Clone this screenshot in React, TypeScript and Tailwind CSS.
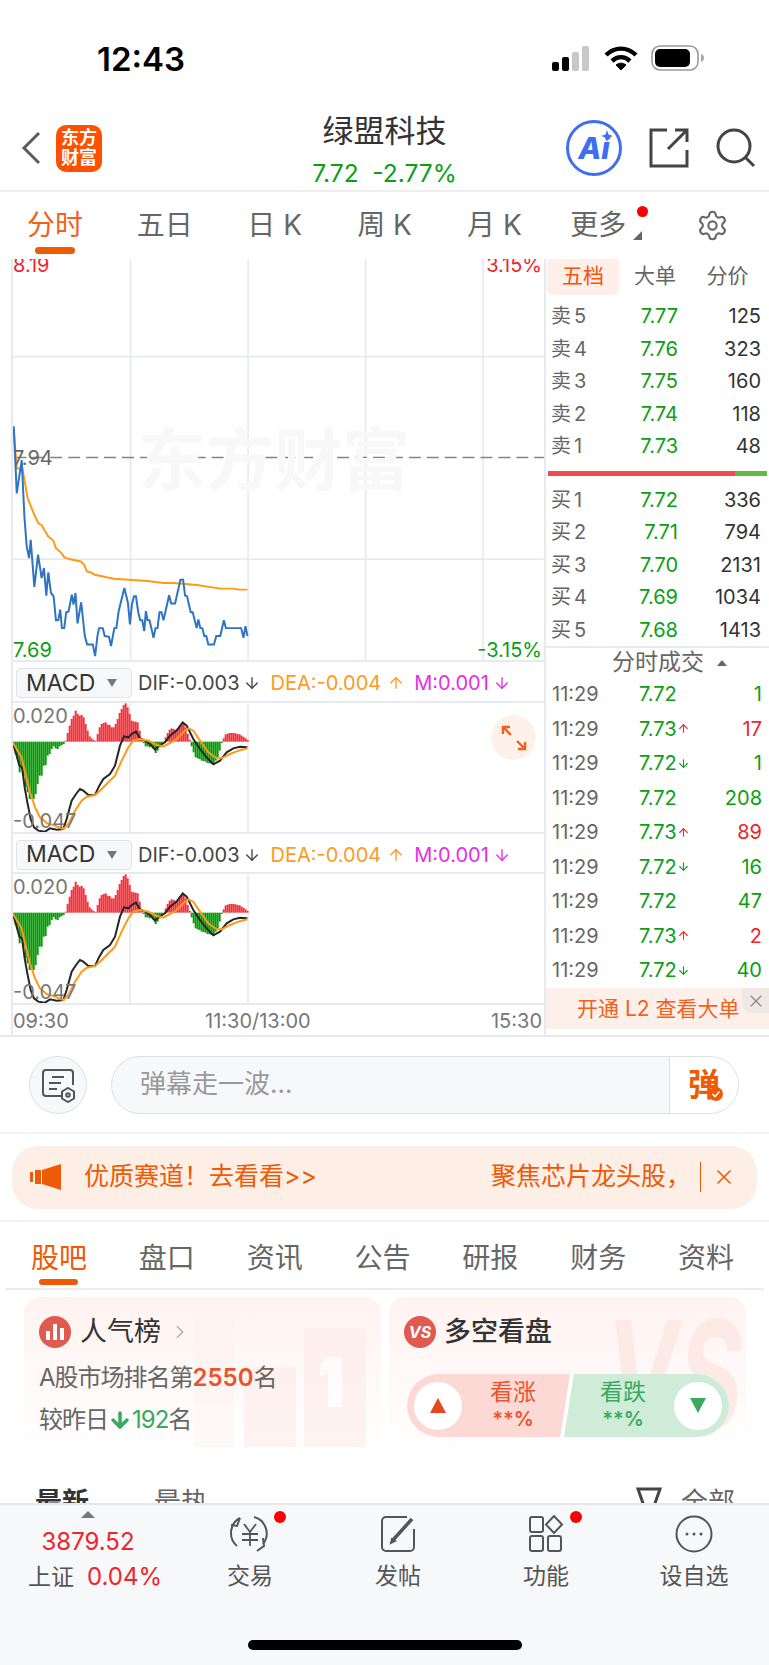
import { ArrowDown, ArrowUp, ChevronDown, ChevronRight, Settings, X } from 'lucide-react';

const sellRows = [
  ['卖', '5', '7.77', '125'],
  ['卖', '4', '7.76', '323'],
  ['卖', '3', '7.75', '160'],
  ['卖', '2', '7.74', '118'],
  ['卖', '1', '7.73', '48'],
];

const buyRows = [
  ['买', '1', '7.72', '336'],
  ['买', '2', '7.71', '794'],
  ['买', '3', '7.70', '2131'],
  ['买', '4', '7.69', '1034'],
  ['买', '5', '7.68', '1413'],
];

type Trade = { price: string; qty: string; dir: 'up' | 'down' | 'flat' };

const trades: Trade[] = [
  { price: '7.72', qty: '1', dir: 'flat' },
  { price: '7.73', qty: '17', dir: 'up' },
  { price: '7.72', qty: '1', dir: 'down' },
  { price: '7.72', qty: '208', dir: 'flat' },
  { price: '7.73', qty: '89', dir: 'up' },
  { price: '7.72', qty: '16', dir: 'down' },
  { price: '7.72', qty: '47', dir: 'flat' },
  { price: '7.73', qty: '2', dir: 'up' },
  { price: '7.72', qty: '40', dir: 'down' },
];

// price curve, 3 units per px
const priceLine =
  '38,528 47,730 62,630 70,800 77,890 84,925 89,870 100,1012 111,915 122,985 129,955 136,1038 142,968 150,1030 158,1040 165,1112 172,1112 178,1080 183,1136 190,1136 196,1088 203,1086 213,1035 218,1065 224,1030 230,1122 241,1058 252,1160 259,1185 276,1185 283,1220 290,1160 295,1136 306,1136 312,1160 325,1162 331,1190 341,1136 347,1136 354,1085 371,1015 382,1060 388,1125 394,1064 400,1040 406,1040 413,1088 419,1112 425,1112 431,1145 436,1085 441,1112 447,1112 459,1165 465,1136 471,1136 477,1088 483,1088 489,1112 506,1037 512,1062 524,1062 540,990 548,990 554,1038 560,1040 571,1088 577,1088 589,1136 594,1110 600,1136 606,1136 612,1160 618,1160 624,1185 641,1185 648,1160 660,1160 671,1112 677,1136 723,1136 730,1165 736,1130 742,1160';

const avgLine =
  '38,540 47,655 64,655 72,700 80,745 90,770 100,795 112,820 122,826 130,840 142,860 157,872 165,895 182,910 190,922 205,928 240,935 250,945 258,965 270,968 282,975 340,987 385,990 440,994 490,1000 520,1000 590,1006 660,1017 700,1017 715,1020 742,1020';

const difLine =
  '38,250 50,290 58,320 66,325 74,385 82,430 92,480 102,505 115,515 135,518 150,508 170,512 190,510 200,480 215,425 228,405 240,390 250,395 265,408 285,408 298,380 310,360 330,345 345,320 360,260 372,232 385,235 395,225 408,218 420,238 435,245 450,255 465,272 480,258 495,250 510,230 530,215 548,190 560,200 580,240 600,270 620,295 640,316 660,305 680,280 700,268 720,263 742,265';

const deaLine =
  '38,250 50,270 65,295 75,340 90,400 105,445 120,475 140,492 165,500 190,510 205,495 225,455 245,425 260,413 285,408 300,395 320,375 345,350 365,305 385,265 400,245 420,240 445,245 470,258 490,262 510,252 530,240 550,220 565,208 580,215 600,245 625,280 650,298 665,298 690,285 715,275 742,268';

// histogram ends, one bar every 6 units starting at x=38, zero axis at y=248
const histogram = [
  262, 285, 300, 340, 330, 350, 385, 400, 420, 420, 420, 405, 375, 350, 350, 320, 318, 290, 285, 270, 262, 268, 270, 262, 258, 255,
  245, 222, 200, 180, 170, 155, 165, 170, 168, 175, 195, 215, 232, 238, 243, 246, 225, 205, 195, 192, 190, 197, 198, 205, 205, 195, 180, 162, 150, 138, 133, 145, 165, 185, 187, 188, 190, 215, 240,
  252, 262, 262, 265, 262, 270, 282, 275, 265, 258,
  247, 235, 222, 212, 208, 210, 212, 208, 200, 195, 195, 205, 225, 242,
  262, 280, 295, 298, 300, 305, 306, 308, 312, 313, 315, 316, 305, 295, 275, 252,
  238, 226, 224, 222, 222, 222, 223, 225, 226, 230, 234, 238, 243,
];

function PriceChart() {
  return (
    <svg viewBox="39 24 1593 1209" className="block h-full w-full">
      <g stroke="#e7eaf1" strokeWidth="5">
        <line x1="390" y1="24" x2="390" y2="1232" />
        <line x1="744" y1="24" x2="744" y2="1232" />
        <line x1="1098" y1="24" x2="1098" y2="1232" />
        <line x1="1452" y1="24" x2="1452" y2="1232" />
        <line x1="36" y1="318" x2="1635" y2="318" />
        <line x1="36" y1="928" x2="1635" y2="928" />
      </g>
      <line x1="40" y1="622" x2="1635" y2="622" stroke="#858585" strokeWidth="5" strokeDasharray="36 18" />
      <polyline points={avgLine} fill="none" stroke="#ff9a14" strokeWidth="6" />
      <polyline points={priceLine} fill="none" stroke="#2f74c4" strokeWidth="6" />
    </svg>
  );
}

function MacdChart() {
  return (
    <svg viewBox="39 132 1593 387" className="block h-full w-full">
      <g stroke="#e7eaf1" strokeWidth="5">
        <line x1="390" y1="134" x2="390" y2="520" />
        <line x1="744" y1="134" x2="744" y2="520" />
      </g>
      {histogram.map((end, i) => (
        <rect
          key={i}
          x={38 + i * 6}
          y={Math.min(end, 248)}
          width="6"
          height={Math.abs(end - 248)}
          fill={end > 248 ? '#0a9b0a' : '#f2333b'}
        />
      ))}
      <polyline points={difLine} fill="none" stroke="#262626" strokeWidth="6" />
      <polyline points={deaLine} fill="none" stroke="#ff9a14" strokeWidth="6" />
    </svg>
  );
}

function MacdHeader() {
  return (
    <div className="flex h-full items-center pl-[3px] pt-[3px] text-[20px] text-[#444]">
      <div className="flex h-[30px] w-[116px] items-center rounded-[4px] border border-[#e0e3ea] bg-[#f7f8fa] pl-[9px] text-[23px] text-[#333]">
        MACD
        <span className="ml-[12px] h-0 w-0 border-x-[5px] border-t-[8px] border-x-transparent border-t-[#777]" />
      </div>
      <span className="ml-[6px]">DIF:-0.003</span>
      <ArrowDown size={18} strokeWidth={1.8} className="ml-[3px]" />
      <span className="ml-[10px] text-[#ff9a1f]">DEA:-0.004</span>
      <ArrowUp size={18} strokeWidth={1.8} className="ml-[6px] text-[#ff9a1f]" />
      <span className="ml-[9px] text-[#e62ee6]">M:0.001</span>
      <ArrowDown size={18} strokeWidth={1.8} className="ml-[4px] text-[#e62ee6]" />
    </div>
  );
}

function MacdPanel({ expand }: { expand?: boolean }) {
  return (
    <div className="relative h-full">
      <MacdChart />
      <span className="absolute left-0 top-[2px] text-[20px] leading-[22px] text-[#777]">0.020</span>
      <span className="absolute left-0 bottom-0 text-[20px] leading-[22px] text-[#777]">-0.047</span>
      {expand && (
        <div className="absolute left-[478px] top-[12px] flex h-[45px] w-[45px] items-center justify-center rounded-full bg-[#fdf1ea]">
          <svg width="26" height="26" viewBox="0 0 26 26" fill="none" stroke="#f2601a" strokeWidth="2.4">
            <path d="M2 9V2h7M2 2l8 8M24 17v7h-7M24 24l-8-8" />
          </svg>
        </div>
      )}
    </div>
  );
}

function QuoteRow({ row }: { row: string[] }) {
  return (
    <div className="flex h-[32.5px] items-center pl-[5px] pr-[8px] text-[20px]">
      <span className="w-[79px] text-[#666]">
        {row[0]}
        <span className="ml-[3px]">{row[1]}</span>
      </span>
      <span className="w-[48px] text-right text-[#0a9f14]">{row[2]}</span>
      <span className="flex-1 text-right text-[#333]">{row[3]}</span>
    </div>
  );
}

function TradeRow({ trade }: { trade: Trade }) {
  const isUp = trade.dir === 'up';
  return (
    <div className="flex h-[34.5px] items-center pl-[6px] pr-[7px] text-[20px]">
      <span className="w-[87px] text-[#666]">11:29</span>
      <span className="text-[#0a9f14]">{trade.price}</span>
      {trade.dir === 'up' && <ArrowUp size={13} strokeWidth={2} className="text-[#f2232b]" />}
      {trade.dir === 'down' && <ArrowDown size={13} strokeWidth={2} className="text-[#0a9f14]" />}
      <span className={`ml-auto ${isUp ? 'text-[#f2232b]' : 'text-[#0a9f14]'}`}>{trade.qty}</span>
    </div>
  );
}

function StatusBar() {
  return (
    <div className="flex h-[100px] items-start justify-between pl-[97px] pr-[64px] pt-[38px]">
      <span className="mt-[2px] text-[33px] font-semibold leading-[38px] text-black">12:43</span>
      <div className="flex items-center gap-[14px] pt-[7px]">
        <svg width="38" height="25" viewBox="0 0 38 25">
          <rect x="0" y="16" width="7" height="9" rx="2" fill="#000" />
          <rect x="10" y="11" width="7" height="14" rx="2" fill="#000" />
          <rect x="20" y="6" width="7" height="19" rx="2" fill="#c8c8c8" />
          <rect x="30" y="0" width="7" height="25" rx="2" fill="#c8c8c8" />
        </svg>
        <svg width="34" height="25" viewBox="0 0 34 25" fill="none" stroke="#000" strokeWidth="4.4">
          <path d="M2 9c9-8.500 21-8.500 30 0" />
          <path d="M8 15c5.500-5 12.500-5 18 0" />
          <path d="M17 24l-5-5c3-2.500 7-2.500 10 0z" fill="#000" strokeWidth="1" />
        </svg>
        <svg width="54" height="26" viewBox="0 0 54 26" fill="none" className="-ml-[1px]">
          <rect x="1" y="1" width="46" height="24" rx="8" stroke="#9a9a9a" strokeWidth="1.6" />
          <rect x="4" y="4" width="35" height="18" rx="5" fill="#000" />
          <path d="M50 9v8c1.800-.6 3-2.200 3-4s-1.200-3.400-3-4z" fill="#a8a8a8" />
        </svg>
      </div>
    </div>
  );
}

function NavBar() {
  return (
    <div className="relative flex h-[92px] items-center justify-between border-b-2 border-[#eeeeee] pl-[21px] pr-[13px] pt-[6px]">
      <div className="flex items-center gap-[15px]">
        <svg width="20" height="34" viewBox="0 0 20 34" fill="none" stroke="#5c5c5c" strokeWidth="3">
          <path d="M18 2L3 17l15 15" />
        </svg>
        <div className="flex h-[47px] w-[46px] flex-col items-center justify-center rounded-[10px] bg-[#ff5000] text-[18px] font-bold leading-[20px] text-white">
          <span>东方</span>
          <span>财富</span>
        </div>
      </div>
      <div className="absolute left-0 right-0 top-[12px] flex flex-col items-center">
        <span className="text-[31px] leading-[38px] text-[#333]">绿盟科技</span>
        <span className="mt-[9px] whitespace-pre text-[24.5px] leading-[28px] text-[#0a9f14]">7.72  -2.77%</span>
      </div>
      <div className="flex items-center gap-[27px]">
        <div className="relative flex h-[56px] w-[56px] items-center justify-center rounded-full border-[3px] border-[#3f6ff0] text-[30px] font-extrabold italic text-[#3f6ff0]">
          Ai
          <svg width="12" height="12" viewBox="0 0 12 12" fill="#3f6ff0" className="absolute left-[32px] top-[7px]">
            <path d="M6 0l1.500 4.500L12 6 7.500 7.500 6 12 4.500 7.500 0 6l4.500-1.500z" />
          </svg>
        </div>
        <svg width="40" height="40" viewBox="0 0 40 40" fill="none" stroke="#444" strokeWidth="3">
          <path d="M18 2H2v36h36V22M38 2L19 21M26 2h12v12" />
        </svg>
        <svg width="40" height="40" viewBox="0 0 40 40" fill="none" stroke="#444" strokeWidth="3">
          <circle cx="18" cy="18" r="16" />
          <path d="M30 30l8 8" />
        </svg>
      </div>
    </div>
  );
}

function RangeTabs() {
  return (
    <div className="grid h-[67px] grid-cols-7 items-center pb-[1px] text-[28px] leading-[34px] text-[#666]">
      <div className="relative flex flex-col items-center text-[#f2601a]">
        分时
        <span className="absolute top-[39px] h-[7px] w-[40px] rounded-full bg-[#ee5a06]" />
      </div>
      <div className="text-center">五日</div>
      <div className="text-center">日 K</div>
      <div className="text-center">周 K</div>
      <div className="text-center">月 K</div>
      <div className="relative pr-[12px] text-center">
        更多
        <span className="absolute left-[88px] top-[-2px] h-[11px] w-[11px] rounded-full bg-[#fa0000]" />
        <span className="absolute left-[84px] top-[23px] h-0 w-0 border-b-[9px] border-l-[9px] border-b-[#666] border-l-transparent" />
      </div>
      <div className="flex justify-center pr-[4px]">
        <Settings size={33} strokeWidth={1.5} className="text-[#666]" />
      </div>
    </div>
  );
}

function ChartColumn() {
  return (
    <div className="ml-[11px] flex w-[533px] flex-col border-l-2 border-[#e7eaf1]">
      <div className="relative h-[405px] overflow-hidden border-b-2 border-[#e7eaf1]">
        <PriceChart />
        <span className="absolute left-[125px] top-[161px] text-[68px] font-bold leading-[80px] text-[#f8f8f8]">东方财富</span>
        <span className="absolute left-0 top-[-5px] text-[20px] leading-[22px] text-[#f2232b]">8.19</span>
        <span className="absolute right-[2px] top-[-5px] text-[20px] leading-[22px] text-[#f2232b]">3.15%</span>
        <span className="absolute left-0 top-[188px] text-[20px] leading-[22px] text-[#666]">7.94</span>
        <span className="absolute left-0 top-[380px] text-[20px] leading-[22px] text-[#0a9f14]">7.69</span>
        <span className="absolute right-[2px] top-[380px] text-[20px] leading-[22px] text-[#0a9f14]">-3.15%</span>
      </div>
      <div className="h-[39px]">
        <MacdHeader />
      </div>
      <div className="h-[133px] border-y-2 border-[#e7eaf1]">
        <MacdPanel expand />
      </div>
      <div className="h-[38px]">
        <MacdHeader />
      </div>
      <div className="h-[133px] border-y-2 border-[#e7eaf1]">
        <MacdPanel />
      </div>
      <div className="relative flex h-[30px] items-center justify-between pr-[2px] pt-[2px] text-[20px] text-[#777]">
        <span>09:30</span>
        <span className="absolute left-[192px]">11:30/13:00</span>
        <span>15:30</span>
      </div>
    </div>
  );
}

function OrderColumn() {
  return (
    <div className="flex flex-1 flex-col border-l-2 border-[#e7eaf1]">
      <div className="flex h-[36px] items-center text-[21px] text-[#666]">
        <div className="ml-[1px] flex h-full w-[72px] items-center justify-center rounded-b-[6px] bg-[#ffefe8] pb-[2px] text-[#f5520a]">五档</div>
        <div className="w-[72px] pb-[2px] text-center">大单</div>
        <div className="w-[73px] pb-[2px] text-center">分价</div>
      </div>
      <div className="mt-[5px]">
        {sellRows.map((row) => (
          <QuoteRow key={row[0] + row[1]} row={row} />
        ))}
      </div>
      <div className="flex h-[21px] items-center px-[2px]">
        <div className="h-[5px] w-[187px] bg-[#ef4b50]" />
        <div className="h-[5px] flex-1 bg-[#62bb48]" />
      </div>
      <div>
        {buyRows.map((row) => (
          <QuoteRow key={row[0] + row[1]} row={row} />
        ))}
      </div>
      <div className="flex h-[31px] items-center justify-center gap-[13px] border-t-2 border-[#e7eaf1] pl-[24px] text-[23px] text-[#666]">
        分时成交
        <span className="h-0 w-0 border-x-[5px] border-b-[6px] border-x-transparent border-b-[#666]" />
      </div>
      <div>
        {trades.map((trade, i) => (
          <TradeRow key={i} trade={trade} />
        ))}
      </div>
      <div className="relative mb-[6px] mt-auto flex h-[41px] items-center bg-[#fdf0ea] pl-[31px] text-[21px] text-[#f2601a]">
        开通 L2 查看大单
        <div className="absolute right-0 top-0 flex h-[25px] w-[27px] items-center justify-center rounded-bl-[10px] bg-[#efe8e4]">
          <X size={20} strokeWidth={1.4} className="text-[#888]" />
        </div>
      </div>
    </div>
  );
}

function DanmuBar() {
  return (
    <div className="flex h-[97px] items-center gap-[24px] border-b-2 border-[#f4f4f4] pl-[29px] pr-[30px]">
      <div className="flex h-[58px] w-[58px] items-center justify-center rounded-full border border-[#dcdfe4] bg-[#f7f8fa]">
        <svg width="36" height="36" viewBox="0 0 36 36" fill="none" stroke="#555" strokeWidth="2">
          <path d="M21 29H6a3 3 0 0 1-3-3V6a3 3 0 0 1 3-3h24a3 3 0 0 1 3 3v12" />
          <path d="M12 10h12M9 16h12M9 22h8" />
          <path d="M28 21l6 3.500v7L28 35l-6-3.500v-7z" />
          <circle cx="28" cy="28" r="1.800" />
        </svg>
      </div>
      <div className="flex h-[58px] flex-1 overflow-hidden rounded-full border border-[#dcdfe4] bg-[#f7f8fa]">
        <div className="flex-1 pl-[28px] text-[26px] leading-[54px] text-[#999]">弹幕走一波...</div>
        <div className="relative flex w-[69px] items-center border-l border-[#dcdfe4] bg-white pl-[18px] text-[32px] font-bold text-[#ee5a06]">
          弹
          <span className="absolute left-[39px] top-[30px] flex h-[14px] w-[14px] items-center justify-center rounded-full bg-[#ee5a06]">
            <svg width="10" height="10" viewBox="0 0 10 10" fill="none" stroke="#fff" strokeWidth="1.600">
              <path d="M1.500 5l2.500 2.500 4.500-5" />
            </svg>
          </span>
        </div>
      </div>
    </div>
  );
}

function PromoBanner() {
  return (
    <div className="flex h-[88px] items-center border-b-2 border-[#f0f0f0] px-[12px]">
      <div className="flex h-[63px] w-full items-center rounded-[26px] bg-[#fdeee6] pl-[18px] pr-[21px] text-[25px] text-[#ee5a06]">
        <svg width="32" height="26" viewBox="0 0 32 26" fill="#ee5a06">
          <rect x="0" y="8" width="3" height="10" />
          <rect x="5" y="6" width="6" height="14" />
          <path d="M12 6L31 0v26L12 20z" />
        </svg>
        <span className="ml-[22px]">优质赛道！去看看&gt;&gt;</span>
        <span className="ml-auto">聚焦芯片龙头股，</span>
        <span className="ml-[9px] h-[30px] w-[1px] bg-[#ee5a06]" />
        <X size={24} strokeWidth={1.6} className="ml-[11px]" />
      </div>
    </div>
  );
}

function ContentTabs() {
  return (
    <div className="mx-[5px] grid h-[68px] grid-cols-7 border-b-2 border-[#ececec] pr-[4px] pt-[16px] text-[28px] leading-[40px] text-[#666]">
      {['股吧', '盘口', '资讯', '公告', '研报', '财务', '资料'].map((name, i) => (
        <div key={name} className={`relative flex justify-center ${i === 0 ? 'text-[#ee5a06]' : ''}`}>
          {name}
          {i === 0 && <span className="absolute top-[41px] h-[6px] w-[39px] rounded-full bg-[#ee5a06]" />}
        </div>
      ))}
    </div>
  );
}

function RankCard() {
  return (
    <div className="relative h-[155px] w-[357px] overflow-hidden rounded-[16px] bg-gradient-to-b from-[#fff3f0] to-white pl-[15px] pt-[18px]">
      <svg width="190" height="140" viewBox="0 0 190 140" className="absolute left-[170px] top-[10px]" fill="#fde9e6" opacity="0.55">
        <rect x="50" y="60" width="52" height="80" />
        <rect x="110" y="22" width="62" height="118" />
        <rect x="0" y="12" width="40" height="128" opacity="0.4" />
        <path d="M134 50h14v50h-14V66l-8 4v-12z" fill="#fff" />
      </svg>
      <div className="relative flex items-center">
        <span className="flex h-[32px] w-[32px] items-center justify-center rounded-full bg-[#e05a50]">
          <svg width="18" height="16" viewBox="0 0 18 16" fill="#fff">
            <rect x="0" y="7" width="4" height="9" />
            <rect x="7" y="0" width="4" height="16" />
            <rect x="14" y="4" width="4" height="12" />
          </svg>
        </span>
        <span className="ml-[9px] text-[27px] leading-[34px] text-[#333]">人气榜</span>
        <ChevronRight size={22} strokeWidth={1.4} className="ml-[8px] text-[#aaa]" />
      </div>
      <div className="relative mt-[10px] text-[24px] leading-[38px] tracking-[-1px] text-[#666]">
        A股市场排名第<span className="font-semibold tracking-normal text-[#e8552d]">2550</span>名
      </div>
      <div className="relative mt-[4px] flex items-center text-[24px] leading-[38px] tracking-[-1px] text-[#666]">
        较昨日
        <ArrowDown size={24} strokeWidth={3.5} className="text-[#3aa960]" />
        <span className="text-[#3aa960]">192</span>名
      </div>
    </div>
  );
}

function BullBearCard() {
  return (
    <div className="relative h-[155px] w-[357px] overflow-hidden rounded-[16px] bg-gradient-to-b from-[#fff3f0] to-white pl-[15px] pt-[18px]">
      <span className="absolute right-[4px] top-0 origin-right scale-x-[0.65] text-[150px] font-bold italic leading-[155px] text-[#fdeae6]">VS</span>
      <div className="relative flex items-center">
        <span className="flex h-[32px] w-[32px] items-center justify-center rounded-full bg-[#e05a50] text-[16px] font-bold italic text-white">VS</span>
        <span className="ml-[8px] text-[27px] font-medium leading-[34px] text-[#333]">多空看盘</span>
      </div>
      <div className="relative ml-[3px] mt-[25px] flex h-[63px] w-[322px] overflow-hidden rounded-full bg-white text-center">
        <div className="flex w-[163px] shrink-0 items-center bg-[#fdd9d6] pl-[7px] [clip-path:polygon(0_0,100%_0,94%_100%,0_100%)]">
          <span className="flex h-[48px] w-[48px] items-center justify-center rounded-full bg-white">
            <span className="h-0 w-0 border-x-[8px] border-b-[15px] border-x-transparent border-b-[#e5481c]" />
          </span>
          <div className="ml-[28px] flex flex-col leading-[27px] text-[#e8552d]">
            <span className="text-[23px]">看涨</span>
            <span className="text-[20px] font-semibold">**%</span>
          </div>
        </div>
        <div className="-ml-[6px] flex flex-1 items-center justify-end bg-[#cfecd8] pr-[7px] [clip-path:polygon(6%_0,100%_0,100%_100%,0_100%)]">
          <div className="mr-[28px] flex flex-col leading-[27px] text-[#3aa960]">
            <span className="text-[23px]">看跌</span>
            <span className="text-[20px] font-semibold">**%</span>
          </div>
          <span className="flex h-[48px] w-[48px] items-center justify-center rounded-full bg-white">
            <span className="h-0 w-0 border-x-[8px] border-t-[15px] border-x-transparent border-t-[#3aa960]" />
          </span>
        </div>
      </div>
    </div>
  );
}

function FeedFilter() {
  return (
    <div className="ml-[35px] mr-[34px] mt-[33px] flex items-center text-[27px] leading-[36px] text-[#666]">
      <span className="font-bold text-[#333]">最新</span>
      <ChevronDown size={18} strokeWidth={1.6} className="ml-[5px] mt-[10px] text-[#555]" />
      <span className="ml-[42px]">最热</span>
      <svg width="26" height="24" viewBox="0 0 26 24" fill="none" stroke="#444" strokeWidth="3" className="-mt-[8px] ml-auto">
        <path d="M2 2h22L17 22H9z" />
      </svg>
      <span className="ml-[19px]">全部</span>
    </div>
  );
}

function BottomBar() {
  return (
    <div className="relative h-[162px] shrink-0 border-t-2 border-[#e6e6e6] bg-[#f7f8fa]">
      <div className="grid grid-cols-[176px_repeat(4,148px)] text-[23px] text-[#555]">
        <div className="relative flex flex-col items-center pt-[21px]">
          <span className="absolute left-[81px] top-[6px] h-0 w-0 border-x-[7px] border-b-[7px] border-x-transparent border-b-[#777]" />
          <span className="text-[24px] leading-[32px] text-[#f2232b]">3879.52</span>
          <span className="mt-[2px] flex items-center self-start whitespace-nowrap pl-[28px] leading-[34px]">
            上证
            <span className="ml-[13px] text-[24px] text-[#f2232b]">0.04%</span>
          </span>
        </div>
        <div className="relative flex flex-col items-center pt-[10px]">
          <svg width="44" height="38" viewBox="0 0 44 38" fill="none" stroke="#555" strokeWidth="2">
            <path d="M12 3a17 17 0 0 0-3 28M26 2a17 17 0 0 1 9 27" />
            <path d="M3 10l6 1 3-8M29 36l7-5-1-8" />
            <path d="M16 9l6 8 6-8M14 19h16M14 25h16M22 17v14" strokeWidth="1.800" />
          </svg>
          <span className="mt-[6px] leading-[34px]">交易</span>
          <span className="absolute left-[98px] top-[6px] h-[12px] w-[12px] rounded-full bg-[#fa0000]" />
        </div>
        <div className="flex flex-col items-center pt-[10px]">
          <svg width="38" height="38" viewBox="0 0 38 38" fill="none" stroke="#555" strokeWidth="2">
            <path d="M28 2H7a4 4 0 0 0-4 4v26a4 4 0 0 0 4 4h24a4 4 0 0 0 4-4V14" />
            <path d="M14 25L33 4" strokeWidth="3.500" />
            <path d="M12 28l1-4 3 2z" fill="#555" />
          </svg>
          <span className="mt-[6px] leading-[34px]">发帖</span>
        </div>
        <div className="relative flex flex-col items-center pt-[10px]">
          <svg width="36" height="38" viewBox="0 0 36 38" fill="none" stroke="#555" strokeWidth="2">
            <rect x="2" y="2" width="13" height="15" rx="2" />
            <rect x="2" y="21" width="13" height="15" rx="2" />
            <rect x="20" y="21" width="13" height="15" rx="2" />
            <path d="M26 1l8 8.500-8 8.500-8-8.500z" />
          </svg>
          <span className="mt-[6px] leading-[34px]">功能</span>
          <span className="absolute left-[98px] top-[6px] h-[12px] w-[12px] rounded-full bg-[#fa0000]" />
        </div>
        <div className="flex flex-col items-center pt-[10px]">
          <svg width="38" height="38" viewBox="0 0 38 38" fill="none" stroke="#555" strokeWidth="2">
            <circle cx="19" cy="19" r="17.500" />
            <circle cx="12" cy="19" r="1.500" fill="#555" stroke="none" />
            <circle cx="19" cy="19" r="1.500" fill="#555" stroke="none" />
            <circle cx="26" cy="19" r="1.500" fill="#555" stroke="none" />
          </svg>
          <span className="mt-[6px] leading-[34px]">设自选</span>
        </div>
      </div>
      <div className="absolute bottom-[15px] left-[248px] h-[10px] w-[274px] rounded-full bg-black" />
    </div>
  );
}

export default function App() {
  return (
    <div className="flex h-[1665px] w-[769px] flex-col overflow-hidden bg-white font-['Inter','Noto_Sans_CJK_SC',sans-serif]">
      <div className="min-h-0 flex-1 overflow-hidden">
        <StatusBar />
        <NavBar />
        <RangeTabs />
        <div className="flex h-[778px] border-b-2 border-[#e7eaf1]">
          <ChartColumn />
          <OrderColumn />
        </div>
        <DanmuBar />
        <PromoBanner />
        <ContentTabs />
        <div className="ml-[24px] mt-[7px] flex gap-[8px]">
          <RankCard />
          <BullBearCard />
        </div>
        <FeedFilter />
      </div>
      <BottomBar />
    </div>
  );
}
